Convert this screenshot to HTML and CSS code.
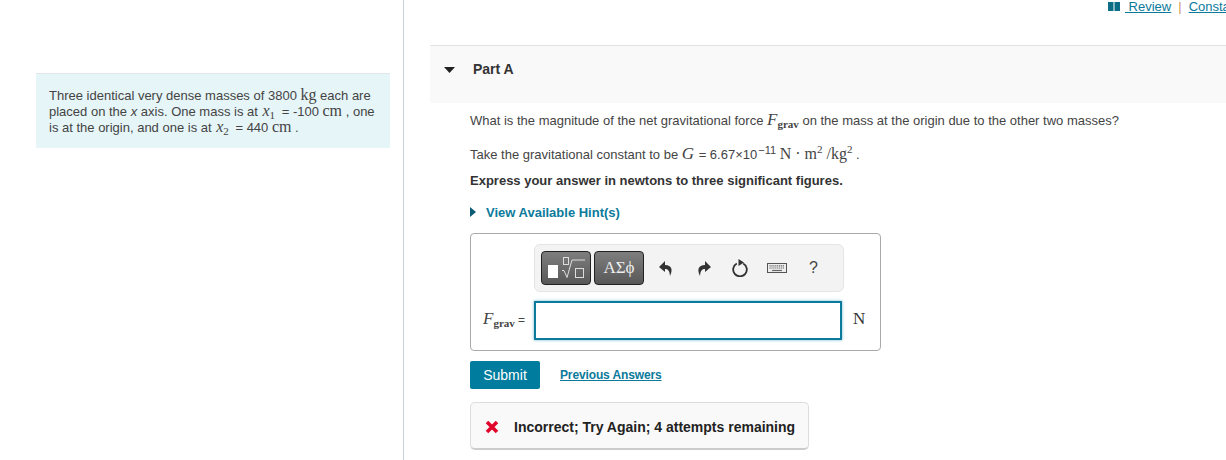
FILE: index.html
```html
<!DOCTYPE html>
<html lang="en">
<head>
<meta charset="utf-8">
<title>Part A</title>
<link rel="stylesheet" href="styles.css">
</head>
<body>
<div class="page">
  <aside class="left">
    <div class="intro">Three identical very dense masses of 3800 <span class="m unit">kg</span> each are placed on the <i>x</i> axis. One mass is at <span class="m var"><i>x</i><sub>1</sub></span> = -100 <span class="m unit">cm</span> , one is at the origin, and one is at <span class="m var"><i>x</i><sub>2</sub></span> = 440 <span class="m unit">cm</span> .</div>
  </aside>
  <main class="right">
    <div class="toplinks">
      <svg class="book" width="12" height="9" viewBox="0 0 12 9"><path d="M0 0h5.500v9H0zM6.500 0H12v9H6.500z" fill="#0b6e86"/></svg>
      <a href="#">&nbsp;Review</a><span class="sep">|</span><a href="#">Constants</a>
    </div>
    <section class="part">
      <div class="part-head">
        <svg class="caret" width="11" height="6" viewBox="0 0 11 6"><path d="M0 0h11L5.500 6z" fill="#222"/></svg>
        <span>Part A</span>
      </div>
      <div class="part-body">
        <p class="q1">What is the magnitude of the net gravitational force <span class="m big"><i>F</i><sub>grav</sub></span> on the mass at the origin due to the other two masses?</p>
        <p class="q2">Take the gravitational constant to be <span class="m big gvar"><i>G</i></span> = 6.67×10<sup class="exp">−11</sup> <span class="m big units">N · m<sup>2</sup> /kg<sup>2</sup></span> .</p>
        <p class="q3">Express your answer in newtons to three significant figures.</p>
        <div class="hint">
          <svg width="6" height="10" viewBox="0 0 6 10"><path d="M0 0l6 5-6 5z" fill="#0b5c74"/></svg>
          <a href="#">View Available Hint(s)</a>
        </div>
        <div class="answer">
          <div class="toolbar">
            <button class="tool t1" type="button" aria-label="Templates">
              <svg width="46" height="30" viewBox="0 0 46 30">
                <rect x="5" y="12" width="10" height="13" fill="#fff"/>
                <rect x="20.500" y="4.500" width="5" height="7" fill="none" stroke="#ddd"/>
                <path d="M19 17.500h2l3 7 5-17.500h13" fill="none" stroke="#ddd"/>
                <rect x="32.500" y="15.500" width="8" height="9" fill="none" stroke="#ddd"/>
              </svg>
            </button>
            <button class="tool t2" type="button">ΑΣϕ</button>
            <svg class="ico undo" width="14" height="15" viewBox="0 0 14 15"><path d="M6 0L0 6l6 5V8c3 0 4.500 1.500 5 7 3-6 2-11-5-11z" fill="#333"/></svg>
            <svg class="ico redo" width="14" height="15" viewBox="0 0 14 15"><path d="M8 0l6 6-6 5V8c-3 0-4.500 1.500-5 7C0 9 1 4 8 4z" fill="#333"/></svg>
            <svg class="ico reset" width="16" height="18" viewBox="0 0 16 18"><path d="M4.800 4.500a6.800 6.800 0 1 0 6.400 0" fill="none" stroke="#333" stroke-width="1.800"/><path d="M6.500 0v7L12 3.500z" fill="#333"/></svg>
            <svg class="ico kb" width="20" height="10" viewBox="0 0 20 10"><rect x=".5" y=".5" width="19" height="9" fill="#eee" stroke="#555"/><path d="M2.500 2.800h15M2.500 5h15" stroke="#666" stroke-width="1.200" stroke-dasharray="1.200 .7"/><path d="M5 7.500h10" stroke="#666" stroke-width="1.200"/></svg>
            <span class="help">?</span>
          </div>
          <div class="entry">
            <label class="lbl"><span class="m big"><i>F</i><sub>grav</sub></span> =</label>
            <input class="field" type="text" aria-label="answer">
            <span class="m nunit">N</span>
          </div>
        </div>
        <div class="actions">
          <button class="submit" type="button">Submit</button>
          <a class="prev" href="#">Previous Answers</a>
        </div>
        <div class="feedback">
          <svg width="14" height="14" viewBox="0 0 14 14"><path d="M2 2l10 10M12 2L2 12" stroke="#e0072b" stroke-width="3.600"/></svg>
          <span>Incorrect; Try Again; 4 attempts remaining</span>
        </div>
      </div>
    </section>
  </main>
</div>
</body>
</html>
```
FILE: styles.css
```css
html, body { margin: 0; padding: 0; background: #fff; }
body { font-family: "Liberation Sans", Arial, sans-serif; font-size: 13px; color: #444; }
.page { display: flex; width: 1226px; height: 460px; overflow: hidden; }
.left { width: 403px; flex: none; border-right: 1px solid #c7cfdb; padding-top: 73px; }
.intro { box-sizing: border-box; width: 354px; height: 75px; margin-left: 36px; padding: 14px 12px 0 13px; background: #e6f5f7; border-top: 1px solid #e3e6e8; line-height: 16px; font-size: 13px; color: #444; }
.m { font-family: "Liberation Serif", serif; }
.unit { font-size: 16px; line-height: 0; }
.var { font-size: 16px; line-height: 0; margin: 0 3px 0 1px; }
.var sub { font-size: 11px; line-height: 0; vertical-align: -3px; }
.right { flex: 1; min-width: 0; padding-left: 26px; }
.toplinks { height: 45px; box-sizing: border-box; display: flex; align-items: flex-start; white-space: nowrap; padding-left: 678px; line-height: 14px; font-size: 13px; }
.toplinks a { color: #0b7a9b; text-decoration: underline; }
.toplinks .book { margin: 2px 5px 0 0; flex: none; }
.sep { color: #d09a5b; margin: 0 7px; }
.part-head { box-sizing: border-box; height: 58px; background: #f9f9f9; border-top: 1px solid #e2e2e2; display: flex; align-items: flex-start; padding: 15px 0 0 14px; font-weight: 700; font-size: 14px; color: #333; }
.part-head .caret { margin-top: 6px; margin-right: 18px; }
.part-body { padding-left: 40px; }
.part-body p { margin: 0; font-size: 13px; line-height: 18px; }
.part-body .q1 { padding-top: 9px; }
.part-body .q2 { padding-top: 16px; }
.part-body .q3 { padding-top: 8px; font-weight: 700; color: #333; }
.big { font-size: 17px; line-height: 0; }
.big sub { font-size: 11px; font-weight: 700; line-height: 0; vertical-align: -3px; }
.big sup { font-size: 11px; line-height: 0; }
.gvar { margin-right: 1px; }
.units { font-size: 16px; }
.exp { font-size: 11px; line-height: 0; margin-left: 1px; }
.hint { margin-top: 13px; display: flex; align-items: center; gap: 10px; height: 18px; font-weight: 700; font-size: 13px; }
.hint a { color: #0b7a9b; text-decoration: none; }
.answer { box-sizing: border-box; width: 411px; height: 118px; margin-top: 12px; border: 1px solid #aaa; border-radius: 4px; padding-top: 10px; }
.toolbar { box-sizing: border-box; width: 310px; height: 48px; margin-left: 63px; background: #f3f3f3; border: 1px solid #e4e4e4; border-radius: 6px; display: flex; align-items: center; padding-left: 6px; }
.tool { box-sizing: border-box; height: 34px; padding: 0; border: 1px solid #222; border-radius: 4px; background: linear-gradient(#7e7e7e, #585858); color: #eee; display: flex; align-items: center; justify-content: center; }
.t1 { width: 50px; margin-right: 3px; }
.t2 { width: 50px; font-family: "Liberation Serif", serif; font-size: 17px; }
.ico { flex: none; }
.undo { margin-left: 15px; }
.redo { margin-left: 24px; }
.reset { margin-left: 21px; }
.kb { margin-left: 19px; }
.help { margin-left: 22px; font-size: 16px; color: #444; }
.entry { display: flex; align-items: center; margin-top: 8px; height: 40px; }
.lbl { width: 63px; box-sizing: border-box; padding-left: 12px; font-size: 12px; white-space: nowrap; }
.field { box-sizing: border-box; width: 308px; height: 39px; margin: 0; border: 2px solid #0b7a9b; box-shadow: 0 0 3px #6fb7cc; background: #fff; outline: none; }
.nunit { margin: -2px 0 0 11px; font-size: 17px; color: #333; }
.actions { display: flex; align-items: center; margin-top: 10px; height: 28px; }
.submit { box-sizing: border-box; width: 70px; height: 28px; border: 0; border-radius: 2px; background: #007c9e; color: #fff; font: 14px "Liberation Sans", Arial, sans-serif; padding: 0; }
.prev { margin-left: 20px; font-size: 12px; font-weight: 700; letter-spacing: -0.13px; color: #0b7a9b; text-decoration: underline; }
.feedback { box-sizing: border-box; width: 339px; height: 48px; margin-top: 13px; display: flex; align-items: center; gap: 15px; padding: 2px 0 0 14px; background: #f9f9f9; border: 1px solid #ddd; border-bottom: 2px solid #ccc; border-radius: 5px; font-weight: 700; font-size: 14px; color: #222; white-space: nowrap; }
```
